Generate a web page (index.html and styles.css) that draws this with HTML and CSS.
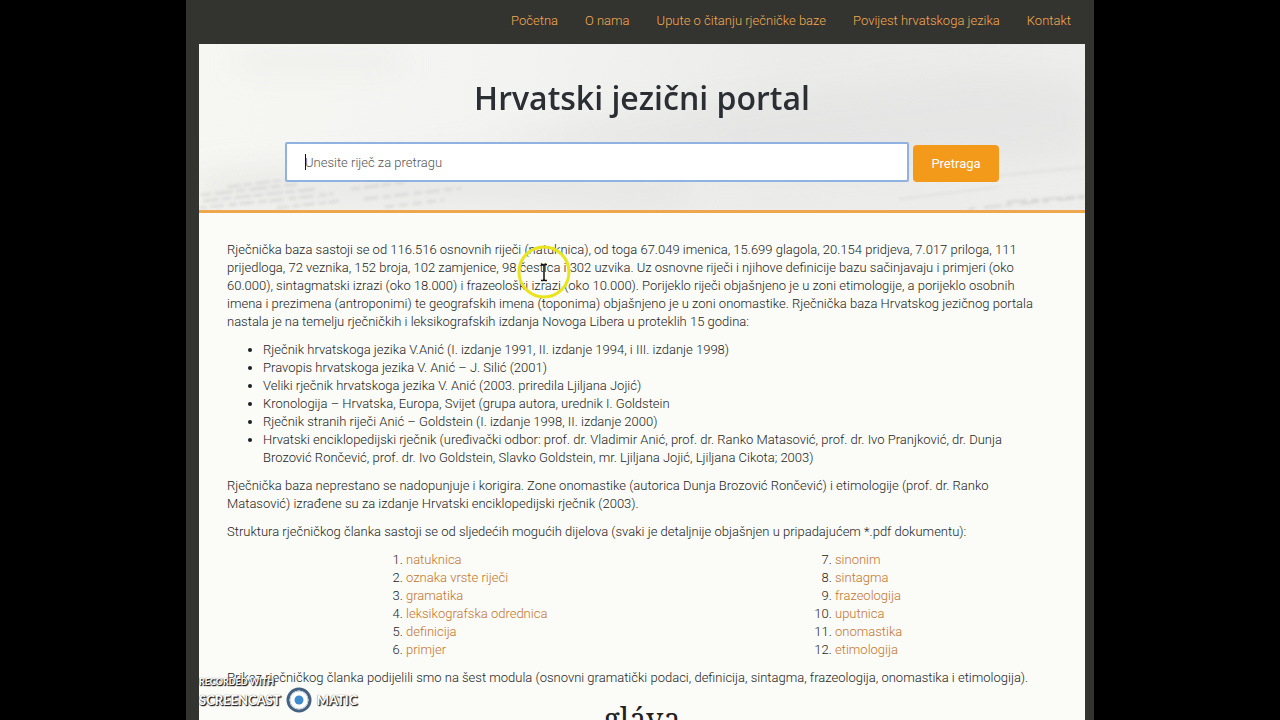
FILE: index.html
```html
<!DOCTYPE html>
<html lang="hr">
<head>
<meta charset="utf-8">
<title>Hrvatski jezični portal</title>
<link rel="stylesheet" href="styles.css">
</head>
<body>
<div class="frame">
  <nav class="nav" aria-label="Glavni izbornik">
    <a href="#">Početna</a>
    <a href="#">O nama</a>
    <a href="#">Upute o čitanju rječničke baze</a>
    <a href="#">Povijest hrvatskoga jezika</a>
    <a href="#">Kontakt</a>
  </nav>
  <div class="page">
    <header class="hero">
      <svg class="hero-art" viewBox="0 0 886 167" preserveAspectRatio="none" aria-hidden="true">
        <defs>
          <filter id="soft" x="-20%" y="-50%" width="140%" height="200%"><feGaussianBlur stdDeviation="14"/></filter>
          <filter id="ink" x="-20%" y="-50%" width="140%" height="200%"><feGaussianBlur stdDeviation="1.6"/></filter>
        </defs>
        <g filter="url(#soft)">
          <path d="M280 95 L520 60 L790 30 L886 40 V110 L560 125 Z" fill="#dfdfdf" opacity=".5"/>
          <path d="M0 130 L280 110 L500 130 L480 167 H0 Z" fill="#e0e0de" opacity=".5"/>
          <path d="M40 12 H200 V24 H40 Z" fill="#e6e6e3" opacity=".7"/>
        </g>
        <g filter="url(#ink)" fill="none" stroke="#b9bab8" stroke-width="2" opacity=".45">
          <path d="M28 144 L92 136" stroke-dasharray="14 3 8 4"/>
          <path d="M2 152 L98 141" stroke-dasharray="10 4 18 3"/>
          <path d="M4 158 L116 146" stroke-dasharray="16 3 9 4"/>
          <path d="M0 165 L134 151" stroke-dasharray="8 3 14 5"/>
          <path d="M78 165 L140 158" stroke-dasharray="12 4 7 3"/>
          <path d="M152 146 L205 139" stroke-dasharray="9 4 15 3"/>
          <path d="M165 156 L262 145" stroke-dasharray="14 5 8 4"/>
          <path d="M186 164 L245 157" stroke-dasharray="9 5"/>
          <path d="M770 166 L886 154" stroke-dasharray="6 9 18 4"/>
          <path d="M808 159 L886 153" stroke-dasharray="20 4 8 3"/>
          <path d="M700 156 L800 144 M780 134 L886 124" opacity=".45"/>
        </g>
      </svg>
      <h1>Hrvatski jezični portal</h1>
      <form class="search">
        <div class="field">
          <input type="text" aria-label="Unesite riječ za pretragu" placeholder="Unesite riječ za pretragu">
          <span class="caret"></span>
        </div>
        <button type="button">Pretraga</button>
      </form>
    </header>
    <main class="content">
      <p>Rječnička baza sastoji se od 116.516 osnovnih riječi (natuknica), od toga 67.049 imenica, 15.699 glagola, 20.154 pridjeva, 7.017 priloga, 111<br>
      prijedloga, 72 veznika, 152 broja, 102 zamjenice, 98 čestica i 302 uzvika. Uz osnovne riječi i njihove definicije bazu sačinjavaju i primjeri (oko<br>
      60.000), sintagmatski izrazi (oko 18.000) i frazeološki izrazi (oko 10.000). Porijeklo riječi objašnjeno je u zoni etimologije, a porijeklo osobnih<br>
      imena i prezimena (antroponimi) te geografskih imena (toponima) objašnjeno je u zoni onomastike. Rječnička baza Hrvatskog jezičnog portala<br>
      nastala je na temelju rječničkih i leksikografskih izdanja Novoga Libera u proteklih 15 godina:</p>
      <ul>
        <li>Rječnik hrvatskoga jezika V.Anić (I. izdanje 1991, II. izdanje 1994, i III. izdanje 1998)</li>
        <li>Pravopis hrvatskoga jezika V. Anić – J. Silić (2001)</li>
        <li>Veliki rječnik hrvatskoga jezika V. Anić (2003. priredila Ljiljana Jojić)</li>
        <li>Kronologija – Hrvatska, Europa, Svijet (grupa autora, urednik I. Goldstein</li>
        <li>Rječnik stranih riječi Anić – Goldstein (I. izdanje 1998, II. izdanje 2000)</li>
        <li>Hrvatski enciklopedijski rječnik (uređivački odbor: prof. dr. Vladimir Anić, prof. dr. Ranko Matasović, prof. dr. Ivo Pranjković, dr. Dunja<br>
        Brozović Rončević, prof. dr. Ivo Goldstein, Slavko Goldstein, mr. Ljiljana Jojić, Ljiljana Cikota; 2003)</li>
      </ul>
      <p>Rječnička baza neprestano se nadopunjuje i korigira. Zone onomastike (autorica Dunja Brozović Rončević) i etimologije (prof. dr. Ranko<br>
      Matasović) izrađene su za izdanje Hrvatski enciklopedijski rječnik (2003).</p>
      <p>Struktura rječničkog članka sastoji se od sljedećih mogućih dijelova (svaki je detaljnije objašnjen u pripadajućem *.pdf dokumentu):</p>
      <div class="modules">
        <ol>
          <li><a href="#">natuknica</a></li>
          <li><a href="#">oznaka vrste riječi</a></li>
          <li><a href="#">gramatika</a></li>
          <li><a href="#">leksikografska odrednica</a></li>
          <li><a href="#">definicija</a></li>
          <li><a href="#">primjer</a></li>
        </ol>
        <ol start="7">
          <li><a href="#">sinonim</a></li>
          <li><a href="#">sintagma</a></li>
          <li><a href="#">frazeologija</a></li>
          <li><a href="#">uputnica</a></li>
          <li><a href="#">onomastika</a></li>
          <li><a href="#">etimologija</a></li>
        </ol>
      </div>
      <p>Prikaz rječničkog članka podijelili smo na šest modula (osnovni gramatički podaci, definicija, sintagma, frazeologija, onomastika i etimologija).</p>
      <div class="headword">gláva</div>
    </main>
  </div>
  <div class="watermark">
    <div class="wm-top">RECORDED WITH</div>
    <div class="wm-row">
      <span>SCREENCAST</span>
      <svg viewBox="0 0 26 26" width="26" height="26" aria-hidden="true">
        <circle cx="13" cy="13" r="11" fill="#fff" stroke="#44617f" stroke-width="3"/>
        <circle cx="13" cy="13" r="9" fill="none" stroke="#b9c9d8" stroke-width="1"/>
        <circle cx="13" cy="13" r="4.5" fill="#3f8bd0"/>
      </svg>
      <span>MATIC</span>
    </div>
  </div>
  <svg class="pointer" viewBox="0 0 56 56" width="56" height="56" aria-hidden="true">
    <circle cx="28" cy="28" r="25" fill="none" stroke="#e8e51f" stroke-width="3"/>
    <path d="M25 20.500 H27 L28 21.500 L29 20.500 H31 M28 21 V36 M25 36.500 H27 L28 35.500 L29 36.500 H31" fill="none" stroke="#111" stroke-width="1.500"/>
  </svg>
</div>
</body>
</html>
```
FILE: styles.css
```css
* { box-sizing: border-box; }

body {
  margin: 0;
  height: 100vh;
  overflow: hidden;
  background: #000;
  color: #1c1f22;
  font: 300 13px/18px Roboto, "Open Sans", sans-serif;
}

a { color: #c4752a; text-decoration: none; }

.frame {
  position: relative;
  max-width: 908px;
  height: 100vh;
  margin: 0 auto;
  padding: 0 9px 0 13px;
  overflow: hidden;
  background: #33332f;
}

.nav {
  display: flex;
  justify-content: flex-end;
  gap: 27px;
  padding: 12px 14px 14px;
}

.nav a { color: #f3aa52; white-space: nowrap; }

.page { background: #fbfbf8; }

.hero {
  position: relative;
  padding: 30px 86px 28px;
  border-bottom: 3px solid #eda84e;
  background: linear-gradient(100deg, #f6f6f3 0%, #f3f3f1 35%, #ebebea 65%, #ededec 100%);
}

.hero-art {
  position: absolute;
  inset: 0;
  width: 100%;
  height: 100%;
}

h1 {
  position: relative;
  margin: 0 0 20px;
  text-align: center;
  color: #2b2e33;
  font: 600 32px/48px "Open Sans", "Noto Sans", sans-serif;
}

.search {
  position: relative;
  display: flex;
  align-items: flex-end;
  gap: 4px;
}

.field { position: relative; flex: 1; }

.field input {
  display: block;
  width: 100%;
  height: 40px;
  padding: 0 18px;
  border: 2px solid #8fb2e3;
  border-radius: 2px;
  outline: none;
  background: #fff;
  color: #333;
  font: inherit;
}

.field input::placeholder { color: #555; opacity: 1; }

.caret {
  position: absolute;
  left: 20px;
  top: 12px;
  width: 1px;
  height: 16px;
  background: #111;
}

.search button {
  width: 86px;
  height: 37px;
  padding: 0;
  border: 0;
  border-radius: 4px;
  background: #f39a1b;
  color: #fff;
  font: 400 13px/18px Roboto, "Open Sans", sans-serif;
}

.content { padding: 28px; white-space: nowrap; }

p, ul, ol { margin: 0 0 10px; }

ul { padding-left: 36px; }

.modules {
  display: grid;
  grid-template-columns: 1fr 1fr;
  column-gap: 28px;
}

.modules ol { padding-left: 179px; }

.headword {
  margin-top: 14px;
  text-align: center;
  color: #222;
  font: 30px/36px "Noto Serif", "DejaVu Serif", serif;
}

.watermark {
  position: absolute;
  left: 13px;
  bottom: 7px;
  color: #fff;
  font: 700 13px/26px Lato, sans-serif;
  text-shadow: 1px 1px 1px #222, 1px 1px 1px #444, 0 0 1px #555;
}

.wm-top { font-size: 9px; line-height: 10px; }

.wm-row { display: flex; align-items: center; gap: 5px; }

.pointer { position: absolute; left: 330px; top: 244px; }
```
